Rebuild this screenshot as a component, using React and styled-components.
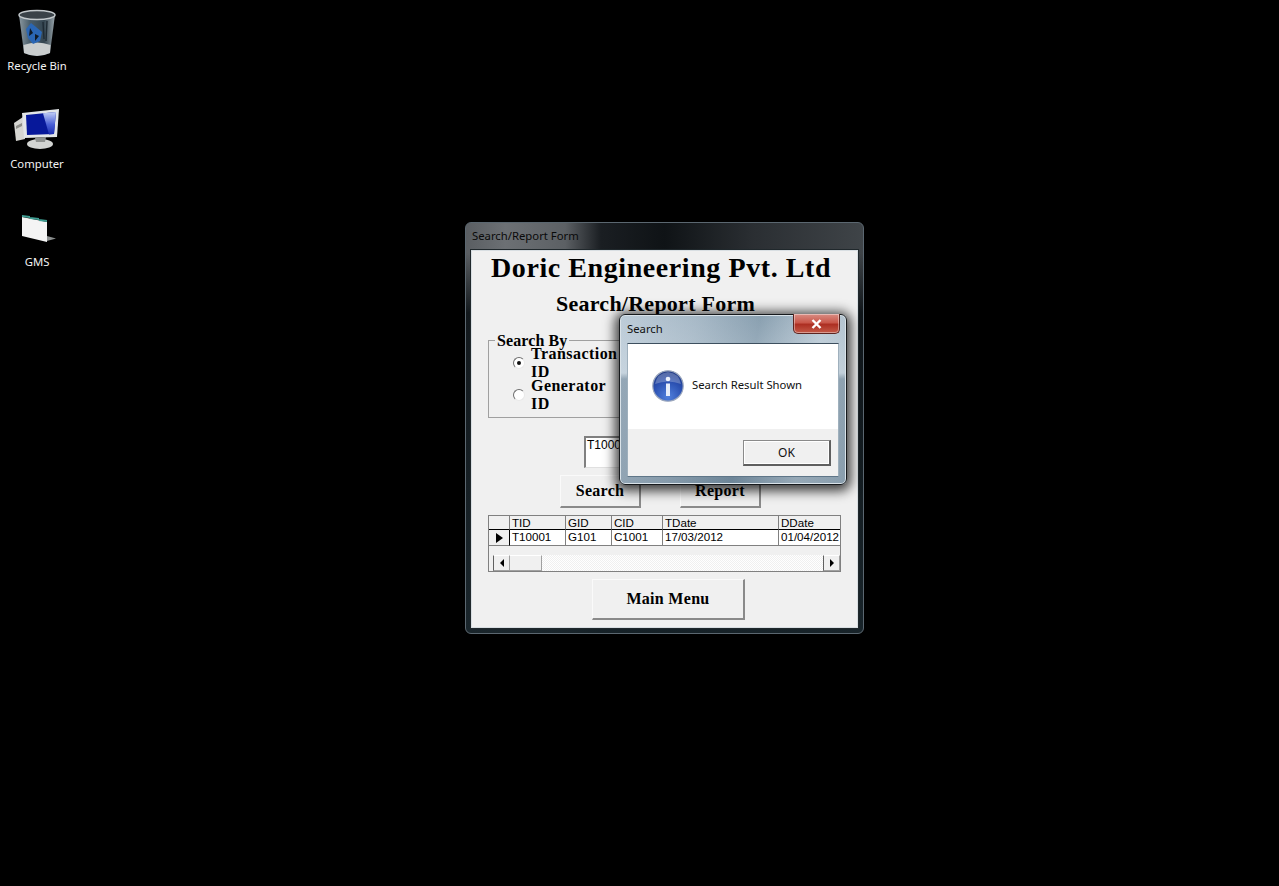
import React from 'react';
import styled, { createGlobalStyle } from 'styled-components';

const GlobalStyle = createGlobalStyle`
  html, body { margin: 0; padding: 0; background: #000; }
  * { box-sizing: border-box; }
`;

const serif = `"Liberation Serif", serif`;
const ui = `"Noto Sans", "Open Sans", sans-serif`;
const grid = `"Liberation Sans", Arial, sans-serif`;

const RecycleIcon = () => (
  <svg width="40" height="48" viewBox="0 0 40 48">
    <defs>
      <linearGradient id="bin" x1="0" x2="1" y1="0" y2="0">
        <stop offset="0" stopColor="#8a979f" />
        <stop offset="0.3" stopColor="#4a5e6b" />
        <stop offset="0.7" stopColor="#33444f" />
        <stop offset="1" stopColor="#9aa5ab" />
      </linearGradient>
    </defs>
    <path d="M2 6 L7 44 Q20 50 33 44 L38 6 Z" fill="url(#bin)" />
    <path d="M6.5 36 Q20 31 33.5 36 L33 44 Q20 50 7 44 Z" fill="#c9cdce" />
    <ellipse cx="20" cy="6" rx="18" ry="4.5" fill="#3a4248" stroke="#c3c9cc" strokeWidth="1.5" />
    <path d="M9 20 L14 14 L19 18 L25 23 L23 32 L16 35 L11 29 Z" fill="#2a66b4" />
    <path d="M13 19 L16 24 L12 27 Z M18 25 L22 27 L18 32 Z" fill="#101a26" />
    <path d="M26 13 L27 30 M30 12 L29 32" stroke="#1e2a33" strokeWidth="1.4" />
  </svg>
);

const ComputerIcon = () => (
  <svg width="48" height="44" viewBox="0 0 48 44">
    <defs>
      <linearGradient id="glare" x1="0" x2="0" y1="0" y2="1">
        <stop offset="0" stopColor="#c4d0f6" />
        <stop offset="0.55" stopColor="#4a60d6" />
        <stop offset="1" stopColor="#1a2cb0" />
      </linearGradient>
    </defs>
    <path d="M1 16 L10 10 L12 32 L3 34 Z" fill="#d6d6d2" />
    <path d="M3 19 L9 16 L9 19 L3 22 Z" fill="#8d8d88" />
    <path d="M9 6 L46 2 L44 30 L11 31 Z" fill="#e3e6e8" />
    <path d="M13 8 L43 5 L41 27 L14 28 Z" fill="#07189a" />
    <path d="M30 6.3 L43 5 L41 27 L36 27.4 Z" fill="url(#glare)" />
    <ellipse cx="27" cy="37" rx="13" ry="5" fill="#d2d4d2" />
    <path d="M22 31 L33 30 L32 35 L23 35 Z" fill="#8f9290" />
  </svg>
);

const AppIcon = () => (
  <svg width="38" height="48" viewBox="18 205 38 48">
    <path d="M22 217 L47 222 L47 242 L22 236 Z" fill="#f4f4f4" />
    <path d="M22 215 L30 216 L30 218 L22 217 Z M30 217 L39 218 L39 220 L30 219 Z M39 219 L47 220 L47 222 L39 221 Z" fill="#3f9d92" />
    <path d="M47 236 L56 238.5 L47 241 Z" fill="#8b8f8f" />
  </svg>
);

const InfoIcon = () => (
  <svg width="32" height="32" viewBox="0 0 32 32">
    <defs>
      <radialGradient id="orb" cx="0.5" cy="0.85" r="0.85">
        <stop offset="0" stopColor="#5080dc" />
        <stop offset="0.6" stopColor="#2a4fb0" />
        <stop offset="1" stopColor="#1b3580" />
      </radialGradient>
    </defs>
    <circle cx="16" cy="16" r="15.2" fill="url(#orb)" stroke="#9aa6bc" strokeWidth="1.2" />
    <path d="M3 14 Q5 3 16 2 Q27 3 29 14 Q16 9 3 14 Z" fill="#fff" opacity="0.25" />
    <circle cx="16" cy="9" r="2.3" fill="#eef3fc" />
    <path d="M14 13.5 H18 V26 H14 Z" fill="#e6edfa" />
  </svg>
);

const desktopItems = [
  { label: 'Recycle Bin', icon: <RecycleIcon /> },
  { label: 'Computer', icon: <ComputerIcon /> },
  { label: 'GMS', icon: <AppIcon /> },
];

const App = () => (
  <Desktop>
    <GlobalStyle />
    <IconColumn>
      {desktopItems.map((item) => (
        <DesktopIcon key={item.label}>
          <IconBox>{item.icon}</IconBox>
          <IconLabel>{item.label}</IconLabel>
        </DesktopIcon>
      ))}
    </IconColumn>

    <FormWindow>
      <TitleBar>Search/Report Form</TitleBar>
      <FormClient>
        <CompanyTitle>Doric Engineering Pvt. Ltd</CompanyTitle>
        <FormTitle>Search/Report Form</FormTitle>
        <GroupBox>
          <GroupLegend>Search By</GroupLegend>
          <RadioRow>
            <Radio $checked />
            <RadioLabel>
              <span>Transaction</span>
              <span>ID</span>
            </RadioLabel>
          </RadioRow>
          <RadioRow>
            <Radio />
            <RadioLabel>
              <span>Generator</span>
              <span>ID</span>
            </RadioLabel>
          </RadioRow>
        </GroupBox>
        <SearchInput>T10001</SearchInput>
        <ButtonRow>
          <FormButton>Search</FormButton>
          <FormButton>Report</FormButton>
        </ButtonRow>
        <GridBox>
          <GridRow>
            <GridHead $w={21} />
            <GridHead $w={56}>TID</GridHead>
            <GridHead $w={46}>GID</GridHead>
            <GridHead $w={51}>CID</GridHead>
            <GridHead $w={116}>TDate</GridHead>
            <GridHead $w={61}>DDate</GridHead>
          </GridRow>
          <DataRow>
            <RowMarker $w={21}><Marker /></RowMarker>
            <GridCell $w={56}>T10001</GridCell>
            <GridCell $w={46}>G101</GridCell>
            <GridCell $w={51}>C1001</GridCell>
            <GridCell $w={116}>17/03/2012</GridCell>
            <GridCell $w={61}>01/04/2012</GridCell>
          </DataRow>
          <GridSpacer />
          <ScrollBar>
            <ScrollButton><ArrowLeft /></ScrollButton>
            <ScrollThumb />
            <ScrollTrack />
            <ScrollButton><ArrowRight /></ScrollButton>
          </ScrollBar>
        </GridBox>
        <MainMenuRow>
          <MainMenuButton>Main Menu</MainMenuButton>
        </MainMenuRow>
      </FormClient>
    </FormWindow>

    <Dialog>
      <DialogTitle>Search</DialogTitle>
      <CloseButton>
        <svg width="11" height="10" viewBox="0 0 11 10">
          <path d="M1.5 1 L9.5 9 M9.5 1 L1.5 9" stroke="#fff" strokeWidth="2.4" />
        </svg>
      </CloseButton>
      <DialogClient>
        <DialogBody>
          <InfoIcon />
          <DialogText>Search Result Shown</DialogText>
        </DialogBody>
        <DialogFooter>
          <OkButton>OK</OkButton>
        </DialogFooter>
      </DialogClient>
    </Dialog>
  </Desktop>
);

export default App;

const Desktop = styled.div`
  position: relative;
  width: 1279px;
  height: 886px;
  background: #000;
  overflow: hidden;
`;

const IconColumn = styled.div`
  display: flex;
  flex-direction: column;
  width: 74px;
`;

const DesktopIcon = styled.div`
  height: 98px;
  display: flex;
  flex-direction: column;
  align-items: center;
`;

const IconBox = styled.div`
  height: 58px;
  padding-top: 9px;
  display: flex;
  justify-content: center;
  align-items: flex-start;
`;

const IconLabel = styled.div`
  font-family: ${ui};
  font-size: 11.3px;
  line-height: 16px;
  color: #f2f2f2;
  white-space: nowrap;
`;

const FormWindow = styled.div`
  position: absolute;
  left: 465px;
  top: 222px;
  width: 399px;
  height: 412px;
  padding: 0 5px 5px;
  border: 1px solid #5b6770;
  border-radius: 6px;
  background:
    linear-gradient(180deg, rgba(12, 18, 22, 0) 0, rgba(12, 18, 22, 0) 30px, rgba(12, 18, 22, 0.92) 90px, rgba(22, 34, 40, 0.95) 100%),
    linear-gradient(90deg, #5a5e62 0%, #6c7074 10%, #5c6064 25%, #1a1e22 34%, #0f1316 50%, #2a2e32 72%, #3f4448 100%);
  display: flex;
  flex-direction: column;
`;

const TitleBar = styled.div`
  height: 27px;
  padding: 5px 0 0 6px;
  margin-left: -5px;
  font-family: ${ui};
  font-size: 11.3px;
  line-height: 16px;
  color: #0a0a0a;
`;

const FormClient = styled.div`
  flex: 1;
  background: #f0f0f0;
  border: 1px solid #d8dee2;
  box-shadow: 0 0 0 1px #20282c;
  display: flex;
  flex-direction: column;
  padding: 0 16px;
  color: #000;
  font-family: ${serif};
  font-weight: 700;
`;

const CompanyTitle = styled.div`
  margin: 0 0 0 3px;
  padding-top: 3px;
  height: 31px;
  font-size: 28px;
  line-height: 28px;
  letter-spacing: 0.58px;
  white-space: nowrap;
`;

const FormTitle = styled.div`
  margin: 10px 0 0 68px;
  height: 24px;
  font-size: 22px;
  line-height: 24px;
  letter-spacing: 0.25px;
  white-space: nowrap;
`;

const GroupBox = styled.div`
  position: relative;
  margin-top: 24px;
  width: 353px;
  height: 78px;
  border: 1px solid #a0a0a0;
  padding: 6px 0 0 24px;
  display: flex;
  flex-direction: column;
`;

const GroupLegend = styled.div`
  position: absolute;
  left: 6px;
  top: -7px;
  padding: 0 2px;
  background: #f0f0f0;
  font-size: 16px;
  line-height: 13px;
  letter-spacing: 0.1px;
`;

const RadioRow = styled.div`
  display: flex;
  align-items: center;
  height: 32px;
  gap: 6px;
`;

const Radio = styled.span`
  position: relative;
  width: 12px;
  height: 12px;
  flex: none;
  border-radius: 50%;
  border: 1px solid;
  border-color: #6e6e6e #e8e8e8 #e8e8e8 #6e6e6e;
  background: #fff;
  &::after {
    content: '';
    display: ${(p) => (p.$checked ? 'block' : 'none')};
    position: absolute;
    left: 3px;
    top: 3px;
    width: 4px;
    height: 4px;
    border-radius: 50%;
    background: #111;
  }
`;

const RadioLabel = styled.div`
  display: flex;
  flex-direction: column;
  gap: 4px;
  font-size: 16px;
  line-height: 14px;
  letter-spacing: 0.45px;
`;

const SearchInput = styled.div`
  margin: 18px 0 0 96px;
  width: 160px;
  height: 32px;
  padding: 0 1px;
  background: #fff;
  border-style: solid;
  border-width: 2px 1px 1px 2px;
  border-color: #808080 #e0e0e0 #e0e0e0 #808080;
  font-family: ${grid};
  font-weight: 400;
  font-size: 12px;
  line-height: 15px;
`;

const ButtonRow = styled.div`
  margin: 7px 0 0 72px;
  display: flex;
  gap: 39px;
`;

const FormButton = styled.div`
  width: 81px;
  height: 33px;
  display: flex;
  align-items: center;
  justify-content: center;
  background: #f0f0f0;
  border-style: solid;
  border-width: 1px 2px 2px 1px;
  border-color: #fafafa #8a8a8a #8a8a8a #fafafa;
  font-size: 16px;
  letter-spacing: 0.3px;
`;

const GridBox = styled.div`
  margin-top: 7px;
  width: 353px;
  height: 57px;
  border: 1px solid #808080;
  display: flex;
  flex-direction: column;
  font-family: ${grid};
  font-weight: 400;
  font-size: 11.6px;
  background: #f0f0f0;
`;

const GridRow = styled.div`
  display: flex;
  height: 14px;
  flex: none;
`;

const DataRow = styled(GridRow)`
  height: 16px;
`;

const GridHead = styled.div`
  width: ${(p) => p.$w}px;
  flex: none;
  padding: 0 0 0 2px;
  line-height: 13px;
  border-right: 1px solid #808080;
  border-bottom: 1px solid #000;
  &:last-child { border-right: none; }
`;

const GridCell = styled(GridHead)`
  background: #fff;
  line-height: 14px;
  border-bottom: 1px solid #808080;
  white-space: nowrap;
  overflow: hidden;
`;

const RowMarker = styled(GridHead)`
  display: flex;
  align-items: center;
  justify-content: center;
  padding: 0;
  border-bottom: 1px solid #808080;
  border-right: 1px solid #000;
`;

const Marker = styled.span`
  width: 0;
  height: 0;
  border-style: solid;
  border-width: 5px 0 5px 7px;
  border-color: transparent transparent transparent #000;
`;

const GridSpacer = styled.div`
  height: 9px;
  flex: none;
`;

const ScrollBar = styled.div`
  flex: 1;
  display: flex;
  padding-left: 4px;
`;

const ScrollButton = styled.div`
  width: 17px;
  flex: none;
  display: flex;
  align-items: center;
  justify-content: center;
  background: #f0f0f0;
  border-style: solid;
  border-width: 1px;
  border-color: #fff #a0a0a0 #a0a0a0 #606060;
`;

const ArrowLeft = styled.span`
  width: 0;
  height: 0;
  border-style: solid;
  border-width: 4px 4px 4px 0;
  border-color: transparent #000 transparent transparent;
`;

const ArrowRight = styled.span`
  width: 0;
  height: 0;
  border-style: solid;
  border-width: 4px 0 4px 4px;
  border-color: transparent transparent transparent #000;
`;

const ScrollThumb = styled.div`
  width: 32px;
  flex: none;
  background: #f0f0f0;
  border-style: solid;
  border-width: 1px 1px 1px 0;
  border-color: #fff #a0a0a0 #a0a0a0 #fff;
`;

const ScrollTrack = styled.div`
  flex: 1;
  background-color: #fff;
  background-image: repeating-conic-gradient(#f0f0f0 0 25%, #fff 0 50%);
  background-size: 2px 2px;
`;

const MainMenuRow = styled.div`
  margin: 7px 0 0 104px;
`;

const MainMenuButton = styled(FormButton)`
  width: 153px;
  height: 41px;
`;

const Dialog = styled.div`
  position: absolute;
  left: 619px;
  top: 314px;
  width: 228px;
  height: 171px;
  padding: 0 7px 7px;
  border: 1px solid #16191c;
  border-radius: 6px;
  background:
    linear-gradient(180deg, rgba(235, 242, 247, 0.1) 0, rgba(235, 242, 247, 0.35) 58px, rgba(60, 85, 105, 0.25) 64px, rgba(60, 85, 105, 0.25) 100%),
    linear-gradient(100deg, #b7c7d4 0%, #9fb2c1 30%, #7e96a8 55%, #b4c4d0 80%, #a3b6c4 100%);
  box-shadow: 0 0 0 1px #d9e2e8 inset, 0 2px 12px 4px rgba(0, 0, 0, 0.75);
  display: flex;
  flex-direction: column;
`;

const DialogTitle = styled.div`
  height: 28px;
  padding-top: 6px;
  font-family: ${ui};
  font-size: 11.3px;
  line-height: 16px;
  color: #111;
`;

const CloseButton = styled.div`
  position: absolute;
  right: 6px;
  top: -1px;
  width: 47px;
  height: 20px;
  display: flex;
  align-items: center;
  justify-content: center;
  border: 1px solid #5c2420;
  border-top: none;
  border-radius: 0 0 5px 5px;
  background: linear-gradient(180deg, #d98d84 0%, #c9574a 45%, #ad2f22 55%, #c45a48 100%);
  box-shadow: 0 0 0 1px rgba(255, 255, 255, 0.4) inset;
`;

const DialogClient = styled.div`
  flex: 1;
  display: flex;
  flex-direction: column;
  border: 1px solid;
  border-color: #3d4f5e #9fb0bd #5f7688;
  background: #f0f0f0;
`;

const DialogBody = styled.div`
  height: 85px;
  background: #fff;
  padding: 26px 0 0 24px;
  display: flex;
  align-items: flex-start;
  gap: 8px;
`;

const DialogText = styled.div`
  margin-top: 7px;
  font-family: ${ui};
  font-size: 11.3px;
  line-height: 16px;
  color: #111;
  white-space: nowrap;
`;

const DialogFooter = styled.div`
  flex: 1;
  display: flex;
  justify-content: flex-end;
  padding: 11px 7px 0 0;
`;

const OkButton = styled.div`
  width: 88px;
  height: 26px;
  display: flex;
  align-items: center;
  justify-content: center;
  background: #f0f0f0;
  border-style: solid;
  border-width: 1px 2px 2px 1px;
  border-color: #8a8a8a #5f5f5f #5f5f5f #8a8a8a;
  box-shadow: 0 0 0 1px #fff inset;
  font-family: ${ui};
  font-size: 12px;
  color: #111;
`;
